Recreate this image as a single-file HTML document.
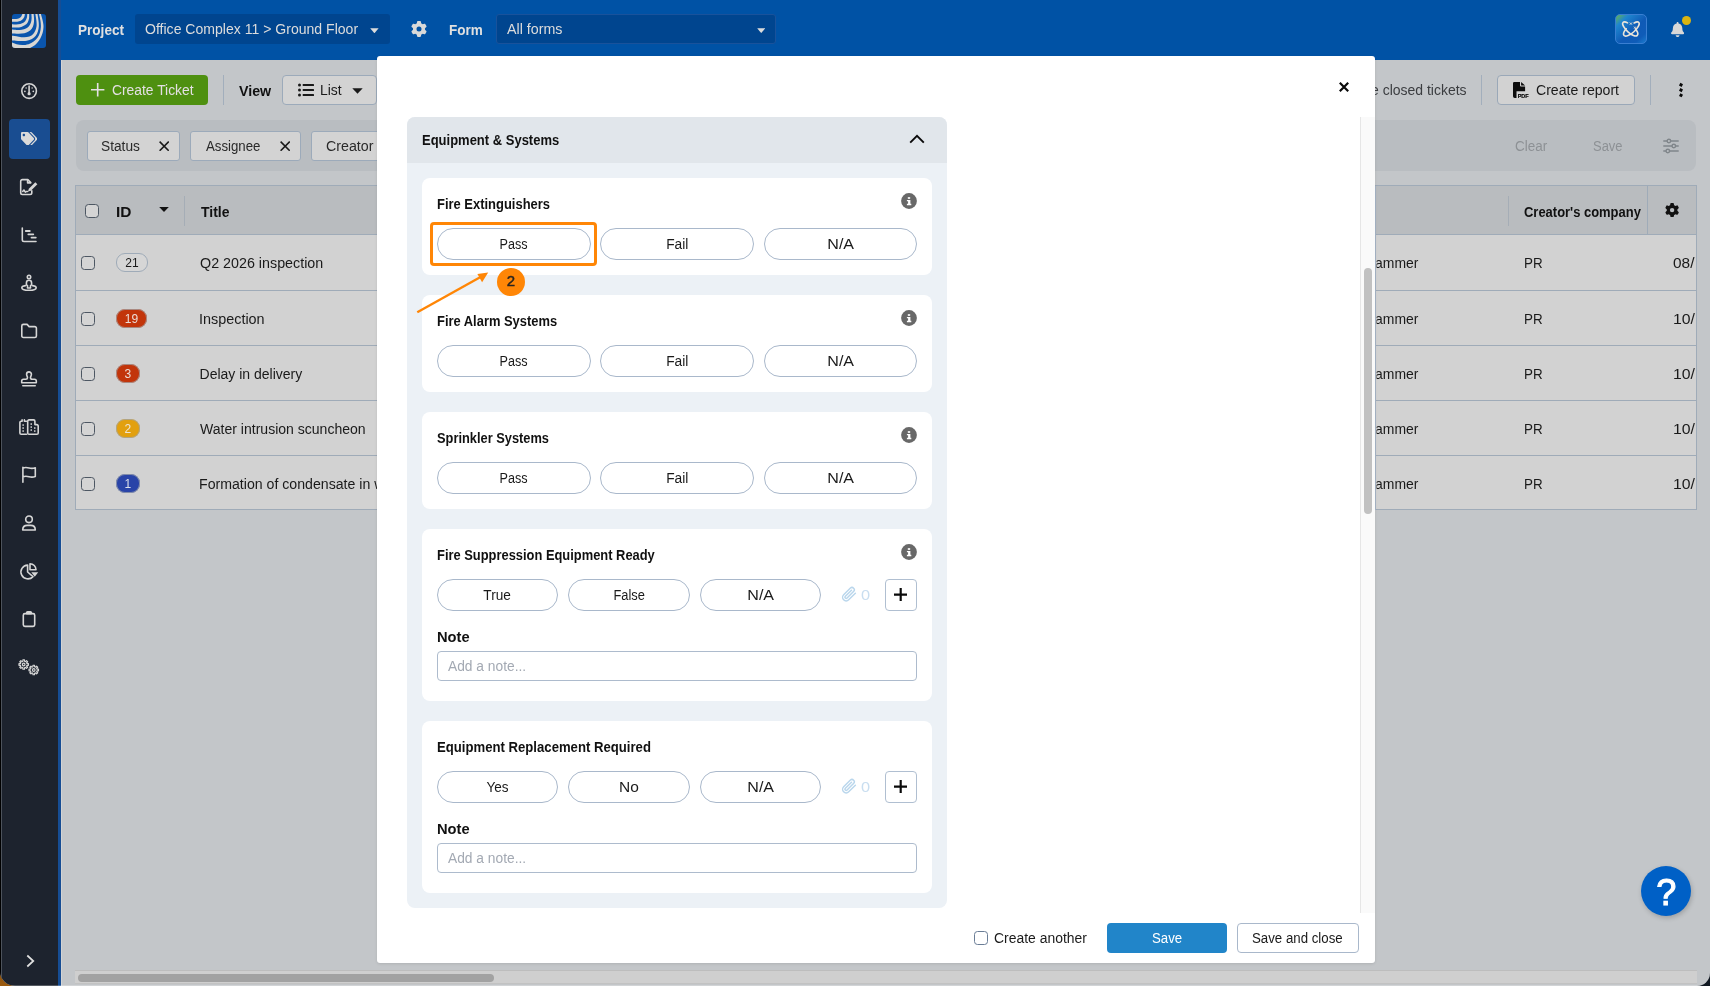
<!DOCTYPE html>
<html lang="en">
<head>
<meta charset="utf-8">
<title>Tickets</title>
<style>
*{box-sizing:border-box;margin:0;padding:0}
html,body{width:1710px;height:986px;overflow:hidden;background:#111822}
body{font-family:"Liberation Sans",sans-serif;font-size:15px;color:#1a1a1a;position:relative}
.abs{position:absolute}
.t{position:absolute;white-space:nowrap;line-height:20px}
.b{font-weight:bold}
#win{will-change:transform;position:absolute;left:0;top:0;width:1710px;height:986px;overflow:hidden;border-radius:0 0 13px 15px;background:#c3c6c9}
#cornerL{position:absolute;left:0;top:940px;width:30px;height:46px;background:linear-gradient(to bottom,#000 0%,#3a2206 40%,#8a510e 70%,#9c5c11 100%)}
/* sidebar */
#side{position:absolute;left:0;top:0;width:58px;height:986px;background:#1d232e;border-left:1px solid #000;box-shadow:inset 1px 0 0 #4d535c}
#strip{position:absolute;left:58px;top:0;width:3px;height:986px;background:#164d94}
#side svg{position:absolute;overflow:visible}
.ic{fill:none;stroke:#d6d6d6;stroke-width:1.6;stroke-linecap:round;stroke-linejoin:round}
/* header */
#hdr{position:absolute;left:58px;top:0;width:1652px;height:60px;background:#0052a5}
.dd{position:absolute;top:14px;height:30px;background:#00458f;border-radius:3px}
/* toolbar */
.btn{position:absolute;height:30px;border-radius:4px}
.vdiv{position:absolute;width:1px;background:#a2aebc}
#fbar{position:absolute;left:76px;top:120px;width:1620px;height:50.500px;background:#b9bdc1;border-radius:8px}
.chip{position:absolute;top:131px;height:29.700px;background:#d3d3d3;border:1px solid #9caaba;border-radius:3px}
/* table */
#tbl{position:absolute;left:75px;top:185px;width:1622px;height:325px;background:#d2d2d2;border:1px solid #9fabb8}
#thead{position:absolute;left:0;top:0;width:1620px;height:49px;background:#b9bcbf;border-bottom:1px solid #9fabb8}
.rl{position:absolute;left:0;width:1620px;height:1px;background:#9fabb8}
.cb{position:absolute;width:14px;height:14px;border:1.200px solid #4d5763;border-radius:3.500px;background:#d4d4d4}
.pill{position:absolute;height:18px;border-radius:9px;font-size:12px;line-height:18px;text-align:center;color:#e4e4e4}

/* modal */
#modal{position:absolute;left:377px;top:56px;width:998.300px;height:907px;background:#fff;border-radius:3px;box-shadow:0 1px 3px rgba(0,0,0,.10)}
#sect{position:absolute;left:407px;top:117px;width:540px;height:791px;background:#ecf1f6;border-radius:8px;overflow:hidden}
#secth{position:absolute;left:0;top:0;width:540px;height:45.500px;background:#e1e6eb}
.card{position:absolute;left:422px;width:510px;background:#fff;border-radius:8px}
.opt{position:absolute;height:32px;border:1px solid #a9b8cb;border-radius:16px;background:#fff;font-size:14px;line-height:30px;text-align:center;color:#1a1a1a}
.opt span{display:inline-block}
.info{position:absolute;width:16px;height:16px}
.note{position:absolute;left:437px;width:480px;height:30px;border:1px solid #adbbcd;border-radius:4px;background:#fff}
.plus{position:absolute;left:885px;width:32px;height:32px;border:1px solid #b0bfd1;border-radius:4px;background:#fff}
/*FIT*/
#tProject{transform:scaleX(0.9045);transform-origin:0 50%;left:77.30px !important}
#tOffice{transform:scaleX(1.0036);transform-origin:0 50%;left:144.65px !important}
#tForm{transform:scaleX(0.9014);transform-origin:0 50%;left:448.20px !important}
#tAllforms{transform:scaleX(1.0185);transform-origin:0 50%;left:507.10px !important}
#tCreate{transform:scaleX(0.9884);transform-origin:0 50%;left:111.56px !important}
#tView{transform:scaleX(0.9481);transform-origin:0 50%;left:239.06px !important}
#tList{transform:scaleX(0.9928);transform-origin:0 50%;left:320.11px !important}
#tReport{transform:scaleX(1.0067);transform-origin:0 50%;left:1535.84px !important}
#tStatus{transform:scaleX(0.9792);transform-origin:0 50%;left:101.97px !important}
#tAssignee{transform:scaleX(0.9456);transform-origin:0 50%;left:206.60px !important}
#tCreator{transform:scaleX(1.0164);transform-origin:0 50%;left:325.94px !important}
#tClear{transform:scaleX(0.9631);transform-origin:0 50%;left:1514.98px !important}
#tFSave{transform:scaleX(0.9246);transform-origin:0 50%;left:1593.61px !important}
#tID{transform:scaleX(1.0296);transform-origin:0 50%;left:115.37px !important}
#tTitle{transform:scaleX(0.9311);transform-origin:0 50%;left:200.77px !important}
#tCompany{transform:scaleX(0.8638);transform-origin:0 50%;left:1524.27px !important}
#tT0{transform:scaleX(1.0218);transform-origin:0 50%;left:199.83px !important}
#tT1{transform:scaleX(1.0283);transform-origin:0 50%;left:199.31px !important}
#tT2{transform:scaleX(1.0000);transform-origin:0 50%;left:199.60px !important}
#tT3{transform:scaleX(1.0027);transform-origin:0 50%;left:200.60px !important}
#tP0{transform:scaleX(0.9577);transform-origin:0 50%;left:1523.74px !important}
#tP1{transform:scaleX(0.9577);transform-origin:0 50%;left:1523.74px !important}
#tP2{transform:scaleX(0.9577);transform-origin:0 50%;left:1523.74px !important}
#tP3{transform:scaleX(0.9577);transform-origin:0 50%;left:1523.74px !important}
#tP4{transform:scaleX(0.9577);transform-origin:0 50%;left:1523.74px !important}
#tSect{transform:scaleX(0.8663);transform-origin:0 50%;left:421.83px !important}
#tC0{transform:scaleX(0.8634);transform-origin:0 50%;left:436.84px !important}
#tC1{transform:scaleX(0.8609);transform-origin:0 50%;left:436.74px !important}
#tC2{transform:scaleX(0.8555);transform-origin:0 50%;left:436.77px !important}
#tC3{transform:scaleX(0.8595);transform-origin:0 50%;left:436.74px !important}
#tC4{transform:scaleX(0.8760);transform-origin:0 50%;left:436.72px !important}
#tO00{transform:scaleX(0.9008);transform-origin:50% 50%}
#tO10{transform:scaleX(0.9008);transform-origin:50% 50%}
#tO20{transform:scaleX(0.9008);transform-origin:50% 50%}
#tO01{transform:scaleX(0.9831);transform-origin:50% 50%}
#tO11{transform:scaleX(0.9831);transform-origin:50% 50%}
#tO21{transform:scaleX(0.9831);transform-origin:50% 50%}
#tO02{transform:scaleX(1.1461);transform-origin:50% 50%}
#tO12{transform:scaleX(1.1461);transform-origin:50% 50%}
#tO22{transform:scaleX(1.1461);transform-origin:50% 50%}
#tO32{transform:scaleX(1.1461);transform-origin:50% 50%}
#tO42{transform:scaleX(1.1461);transform-origin:50% 50%}
#tO30{transform:scaleX(0.9745);transform-origin:50% 50%}
#tO31{transform:scaleX(0.9191);transform-origin:50% 50%}
#tO40{transform:scaleX(0.9655);transform-origin:50% 50%}
#tO41{transform:scaleX(1.1077);transform-origin:50% 50%}
#tZ3{transform:scaleX(1.1704);transform-origin:0 50%;left:861.41px !important}
#tZ4{transform:scaleX(1.1704);transform-origin:0 50%;left:861.41px !important}
#tN3{transform:scaleX(0.9795);transform-origin:0 50%;left:436.82px !important}
#tN4{transform:scaleX(0.9795);transform-origin:0 50%;left:436.82px !important}
#tPh3{transform:scaleX(0.9840);transform-origin:0 50%;left:448.10px !important}
#tPh4{transform:scaleX(0.9840);transform-origin:0 50%;left:448.10px !important}
#tAnother{transform:scaleX(0.9946);transform-origin:0 50%;left:994.15px !important}
#tSave{transform:scaleX(0.9443);transform-origin:0 50%;left:1151.79px !important}
#tSaveClose{transform:scaleX(0.9471);transform-origin:0 50%;left:1252.49px !important}
#tD0{transform:scaleX(1.1000);transform-origin:0 50%;left:1673.25px !important}
#tD1{transform:scaleX(1.1297);transform-origin:0 50%;left:1672.67px !important}
#tD2{transform:scaleX(1.1297);transform-origin:0 50%;left:1672.67px !important}
#tD3{transform:scaleX(1.1297);transform-origin:0 50%;left:1672.67px !important}
#tD4{transform:scaleX(1.1297);transform-origin:0 50%;left:1672.67px !important}
#tT4{transform:scaleX(1.0100);transform-origin:0 50%}
#tHide{transform:scaleX(0.9988);transform-origin:0 50%;left:1350.29px !important}
#tA0{transform:scaleX(0.9965);transform-origin:0 50%;left:1341.07px !important;clip-path:inset(0 0 0 35.7px)}
#tA1{transform:scaleX(0.9965);transform-origin:0 50%;left:1341.07px !important;clip-path:inset(0 0 0 35.7px)}
#tA2{transform:scaleX(0.9965);transform-origin:0 50%;left:1341.07px !important;clip-path:inset(0 0 0 35.7px)}
#tA3{transform:scaleX(0.9965);transform-origin:0 50%;left:1341.07px !important;clip-path:inset(0 0 0 35.7px)}
#tA4{transform:scaleX(0.9965);transform-origin:0 50%;left:1341.07px !important;clip-path:inset(0 0 0 35.7px)}
/*ENDFIT*/
/*FIX*/
#tD0{margin-left:-0.68px}
#tD1{margin-left:0.16px}
#tD2{margin-left:0.16px}
#tD3{margin-left:0.16px}
#tD4{margin-left:0.16px}
#tProject{margin-left:0.80px}
#tOffice{margin-left:0.46px}
#tForm{margin-left:0.80px}
#tAllforms{margin-left:-0.10px}
#tCreate{margin-left:0.22px}
#tList{margin-left:-0.06px}
#tReport{margin-left:0.20px}
#tStatus{margin-left:-0.80px}
#tAssignee{margin-left:-0.20px}
#tCreator{margin-left:0.40px}
#tFSave{margin-left:-0.46px}
#tID{margin-left:0.90px}
#tTitle{margin-left:0.64px}
#tCompany{margin-left:0.11px}
#tT0{margin-left:-0.11px}
#tT1{margin-left:-0.50px}
#tT2{margin-left:-0.05px}
#tT3{margin-left:-0.26px}
#tP0{margin-left:0.16px}
#tP1{margin-left:0.16px}
#tP2{margin-left:0.16px}
#tP3{margin-left:0.16px}
#tP4{margin-left:0.16px}
#tSect{margin-left:0.40px}
#tC0{margin-left:0.40px}
#tC1{margin-left:0.20px}
#tC2{margin-left:0.18px}
#tC3{margin-left:0.20px}
#tC4{margin-left:0.20px}
#tN3{margin-left:0.60px}
#tN4{margin-left:0.60px}
#tPh3{margin-left:-0.09px}
#tPh4{margin-left:-0.09px}
#tZ3{margin-left:-0.32px}
#tZ4{margin-left:-0.32px}
#tAnother{margin-left:-0.10px}
#tSave{margin-left:-0.12px}
#tSaveClose{margin-left:-0.89px}
#tT4{margin-left:-0.16px}
/*ENDFIX*/
</style>
</head>
<body>
<div id="cornerL"></div>
<div id="win">

<!-- ============ HEADER ============ -->
<div id="hdr"></div>
<div class="t b" id="tProject" style="left:78px;top:19.600px;color:#e0e0e0;font-size:15px">Project</div>
<div class="dd" style="left:135px;width:255px"></div>
<div class="t" id="tOffice" style="left:145px;top:18.900px;color:#dcdcdc;font-size:14px">Office Complex 11 &gt; Ground Floor</div>
<svg class="abs" style="left:369.800px;top:27.500px" width="8.800" height="5.500" viewBox="0 0 10 6"><path d="M0.200 0.200h9.600L5 5.900z" fill="#dcdcdc"/></svg>
<svg class="abs" id="gear1" style="left:411px;top:21px" width="16" height="16" viewBox="0 0 512 512"><path fill="#d9d9d9" d="M495.9 166.600c3.200 8.700.500 18.400-6.400 24.600l-43.300 39.400c1.100 8.300 1.700 16.800 1.700 25.400s-.6 17.100-1.700 25.400l43.300 39.400c6.900 6.200 9.600 15.900 6.400 24.600c-4.400 11.900-9.700 23.300-15.800 34.300l-4.700 8.100c-6.600 11-14 21.400-22.100 31.200c-5.900 7.200-15.700 9.600-24.500 6.800l-55.700-17.700c-13.400 10.300-28.200 18.900-44 25.400l-12.500 57.100c-2 9.100-9 16.300-18.200 17.800c-13.800 2.300-28 3.500-42.500 3.500s-28.700-1.200-42.500-3.500c-9.200-1.500-16.200-8.700-18.200-17.800l-12.500-57.100c-15.800-6.500-30.600-15.100-44-25.400L83.100 425.900c-8.800 2.800-18.600.300-24.500-6.800c-8.100-9.800-15.500-20.200-22.100-31.200l-4.700-8.100c-6.100-11-11.400-22.400-15.800-34.300c-3.200-8.700-.5-18.400 6.400-24.600l43.300-39.400C64.600 273.100 64 264.600 64 256s.6-17.100 1.700-25.400L22.400 191.200c-6.900-6.200-9.600-15.900-6.400-24.600c4.400-11.900 9.700-23.300 15.800-34.300l4.700-8.100c6.600-11 14-21.400 22.100-31.200c5.900-7.200 15.700-9.600 24.500-6.800l55.700 17.700c13.400-10.300 28.200-18.900 44-25.400l12.500-57.100c2-9.100 9-16.300 18.200-17.800C227.300 1.200 241.500 0 256 0s28.700 1.200 42.500 3.500c9.200 1.500 16.200 8.700 18.200 17.800l12.500 57.100c15.800 6.500 30.600 15.100 44 25.400l55.700-17.700c8.800-2.800 18.600-.3 24.500 6.800c8.100 9.800 15.500 20.200 22.100 31.200l4.700 8.100c6.100 11 11.400 22.400 15.800 34.300zM256 336a80 80 0 1 0 0-160 80 80 0 1 0 0 160z"/></svg>
<div class="t b" id="tForm" style="left:449px;top:19.600px;color:#e0e0e0;font-size:15px">Form</div>
<div class="dd" style="left:496px;width:280px;border:1px solid #19529b"></div>
<div class="t" id="tAllforms" style="left:507px;top:18.900px;color:#dcdcdc;font-size:14px">All forms</div>
<svg class="abs" style="left:756.800px;top:27.700px" width="8.400" height="5.300" viewBox="0 0 10 6"><path d="M0.200 0.200h9.600L5 5.900z" fill="#dcdcdc"/></svg>

<!-- AI button + bell -->
<svg class="abs" style="left:1615px;top:14px" width="32" height="30" viewBox="0 0 32 30"><defs><linearGradient id="aig" x1="0" y1="0" x2="1" y2="1"><stop offset="0" stop-color="#6fb844"/><stop offset=".22" stop-color="#1f86cf"/><stop offset=".55" stop-color="#0f5ab6"/><stop offset=".8" stop-color="#0f5cb8"/><stop offset="1" stop-color="#1c7fd0"/></linearGradient></defs><rect x=".5" y=".5" width="31" height="29" rx="4.500" fill="url(#aig)" stroke="#3a7fd2"/>
<g transform="translate(16 15.200) scale(.9) translate(-16 -15.200)"><g fill="none" stroke="#e9e4da" stroke-width="1.800" stroke-linecap="round"><path d="M12.200 8.200c-2.300-1.200-4.300-1.300-5.100-.4c-1.600 1.700 1.300 6.400 5.500 10.300s8.800 5.700 10.400 4c1.300-1.400.2-4.300-2.200-7.300"/><path d="M19.500 8.300c2.300-1.300 4.300-1.500 5.200-.6c1.600 1.700-1.300 6.400-5.500 10.300s-9.300 5.900-10.900 4.200c-1.300-1.400-.2-4.400 2.300-7.500"/></g><g stroke="#e9e4da" stroke-width="1" fill="none"><path d="M14.700 7.800l2.400 2.400M17.100 7.800l-2.400 2.400M19.300 12.300l2 2M21.300 12.300l-2 2"/></g></g></svg>
<svg class="abs" style="left:1671px;top:22px" width="13.200" height="15" viewBox="0 0 448 512"><path fill="#d8d8d8" d="M224 512c35.320 0 63.970-28.650 63.970-64H160.030c0 35.350 28.650 64 63.970 64zm215.390-149.710c-19.320-20.760-55.470-51.990-55.470-154.290 0-77.700-54.480-139.900-127.940-155.160V32c0-17.670-14.320-32-31.980-32s-31.980 14.330-31.980 32v20.840C118.560 68.100 64.080 130.300 64.080 208c0 102.300-36.150 133.530-55.470 154.290-6 6.450-8.660 14.160-8.610 21.710.11 16.400 12.980 32 32.100 32h383.800c19.120 0 32-15.600 32.100-32 .05-7.550-2.610-15.270-8.610-21.710z"/></svg>
<div class="abs" style="left:1682px;top:16px;width:9px;height:9px;border-radius:5px;background:#dab411"></div>
<!-- ============ SIDEBAR ============ -->
<div id="side"></div>
<div id="strip"></div>
<div class="abs" style="left:9px;top:119px;width:41px;height:40px;background:#194d91;border-radius:4px"></div>
<!-- logo -->
<svg class="abs" style="left:12px;top:14px" width="34" height="34" viewBox="0 0 34 34">
<defs><clipPath id="lgc"><rect x="0" y="0" width="34" height="34" rx="3"/></clipPath></defs>
<g clip-path="url(#lgc)"><rect width="34" height="34" fill="#0a55ad"/>
<path fill="#d9d7d3" d="M12.90 0.00C12.80 0.48 12.73 1.95 12.27 2.90C11.80 3.84 10.99 4.95 10.14 5.66C9.28 6.37 8.29 6.80 7.16 7.16C6.02 7.51 4.51 7.69 3.32 7.79C2.13 7.90 0.55 7.79 0.00 7.79L0.00 5.03C0.70 5.03 2.98 5.17 4.17 5.03C5.37 4.88 6.30 4.60 7.16 4.17C8.01 3.75 8.75 3.17 9.28 2.47C9.82 1.77 10.17 0.41 10.35 0.00ZM17.16 0.00C17.14 0.77 17.28 3.19 17.04 4.60C16.79 6.01 16.33 7.37 15.67 8.43C15.02 9.50 14.18 10.24 13.12 10.99C12.05 11.73 10.70 12.48 9.28 12.90C7.86 13.33 6.15 13.44 4.60 13.54C3.05 13.65 0.77 13.54 0.00 13.54L0.00 10.35C0.41 10.38 1.42 10.56 2.47 10.56C3.52 10.56 5.03 10.56 6.30 10.35C7.58 10.14 9.00 9.82 10.14 9.28C11.27 8.75 12.34 8.08 13.12 7.16C13.90 6.23 14.47 4.94 14.82 3.75C15.18 2.56 15.18 0.62 15.25 0.00ZM21.64 0.00C21.71 0.91 22.06 3.76 22.06 5.45C22.06 7.14 21.99 8.65 21.64 10.14C21.28 11.63 20.78 13.19 19.93 14.40C19.08 15.60 17.80 16.56 16.52 17.38C15.25 18.19 13.90 18.90 12.27 19.29C10.63 19.68 8.77 19.68 6.73 19.72C4.68 19.75 1.12 19.54 0.00 19.51L0.00 15.46C0.77 15.53 2.98 15.85 4.60 15.89C6.22 15.92 8.15 15.92 9.71 15.67C11.27 15.42 12.76 14.96 13.97 14.40C15.18 13.83 16.13 13.19 16.95 12.27C17.77 11.34 18.43 10.14 18.87 8.86C19.31 7.58 19.50 6.08 19.59 4.60C19.68 3.12 19.45 0.77 19.42 0.00ZM25.47 0.00C25.65 1.12 26.31 4.68 26.53 6.73C26.76 8.77 26.94 10.49 26.83 12.27C26.72 14.04 26.41 15.81 25.89 17.38C25.38 18.94 24.76 20.36 23.76 21.64C22.77 22.91 21.42 24.19 19.93 25.04C18.44 25.89 16.67 26.43 14.82 26.75C12.98 27.07 10.70 26.97 8.86 26.96C7.01 26.94 5.22 26.73 3.75 26.66C2.27 26.59 0.62 26.55 0.00 26.53L0.00 21.64C0.41 21.69 1.35 21.80 2.47 21.98C3.59 22.15 5.10 22.47 6.73 22.70C8.36 22.93 10.49 23.37 12.27 23.34C14.04 23.30 15.89 23.06 17.38 22.49C18.87 21.92 20.22 20.93 21.21 19.93C22.20 18.94 22.79 17.80 23.34 16.52C23.89 15.25 24.35 13.90 24.53 12.27C24.71 10.63 24.60 8.77 24.40 6.73C24.20 4.68 23.52 1.12 23.34 0.00ZM28.88 0.00C29.09 0.77 29.74 2.91 30.15 4.60C30.57 6.29 31.13 8.57 31.35 10.14C31.56 11.70 31.56 12.48 31.43 13.97C31.30 15.46 31.08 17.38 30.58 19.08C30.08 20.78 29.37 22.56 28.45 24.19C27.53 25.82 26.25 27.53 25.04 28.88C23.84 30.22 22.42 31.42 21.21 32.28C20.00 33.15 18.37 33.77 17.80 34.07L0 34L0.00 28.45C0.77 28.73 2.91 29.73 4.60 30.15C6.29 30.58 8.15 31.01 10.14 31.01C12.12 31.01 14.61 30.72 16.52 30.15C18.44 29.59 20.14 28.66 21.64 27.60C23.13 26.53 24.44 25.18 25.47 23.76C26.50 22.35 27.24 20.85 27.81 19.08C28.38 17.31 28.77 15.18 28.88 13.12C28.98 11.06 28.77 8.92 28.45 6.73C28.13 4.54 27.21 1.12 26.96 0.00Z"/></g></svg>
<!-- 1 gauge -->
<svg class="abs" style="left:19px;top:81px" width="20" height="20" viewBox="0 0 20 20"><g class="ic" stroke-width="1.500"><circle cx="10.100" cy="10.100" r="7.300"/><path d="M10.100 5v7"/></g><circle cx="10.100" cy="12.700" r="1.600" fill="#d6d6d6"/><circle cx="5.900" cy="10.300" r=".85" fill="#d6d6d6"/><circle cx="14.300" cy="10.300" r=".85" fill="#d6d6d6"/><circle cx="7.100" cy="7.100" r=".75" fill="#d6d6d6"/><circle cx="13.100" cy="7.100" r=".75" fill="#d6d6d6"/></svg>
<!-- 2 tags -->
<svg class="abs" style="left:21px;top:131.700px" width="16.400" height="13.600" viewBox="0 0 640 512" preserveAspectRatio="none"><path fill="#dadada" d="M497.941 225.941L286.059 14.059A48 48 0 0 0 252.118 0H48C21.490 0 0 21.490 0 48v204.118a48 48 0 0 0 14.059 33.941l211.882 211.882c18.744 18.745 49.136 18.746 67.882 0l204.118-204.118c18.745-18.745 18.745-49.137 0-67.882zM112 160c-26.510 0-48-21.490-48-48s21.490-48 48-48 48 21.490 48 48-21.490 48-48 48zm513.941 133.823L421.823 497.941c-18.745 18.745-49.137 18.745-67.882 0l-.36-.36L527.640 323.522c16.999-16.999 26.360-39.600 26.360-63.640s-9.362-46.641-26.360-63.640L331.397 0h48.721a48 48 0 0 1 33.941 14.059l211.882 211.882c18.745 18.745 18.745 49.137 0 67.882z"/></svg>
<!-- 3 file pen -->
<svg class="abs" style="left:18px;top:177px" width="20" height="20" viewBox="0 0 20 20"><g class="ic" stroke-width="1.500"><path d="M13.800 13.800v2a1.700 1.700 0 0 1-1.700 1.700H4.400a1.700 1.700 0 0 1-1.700-1.700V4.300a1.700 1.700 0 0 1 1.700-1.700h5.400l2.800 2.800"/><path d="M9.600 2.700v3.200h3.100"/><path d="M4.800 14.500c.8-2 1.500-2 2 0c.4.900 1 .7 1.600 0h1.200"/></g><path d="M17.300 5.200l2.100 2.100-6.500 6.500-2.900.8.800-2.900z" fill="#d6d6d6"/></svg>
<!-- 4 gantt -->
<svg class="abs" style="left:19px;top:225px" width="20" height="20" viewBox="0 0 20 20"><g class="ic"><path d="M3.300 3v11.800a1.700 1.700 0 0 0 1.700 1.700h12"/><path d="M6.800 6h4M9.300 9.300h5M12.500 12.600h4.300" stroke-width="1.800"/></g></svg>
<!-- 5 street view -->
<svg class="abs" style="left:19px;top:273px" width="20" height="20" viewBox="0 0 20 20"><g class="ic" stroke-width="1.500"><circle cx="10" cy="4" r="1.700"/><path d="M7.400 9.900a2.600 2.600 0 0 1 5.200 0v1.900l-1.100.8v2.400H8.500v-2.400l-1.100-.8z"/><path d="M6.300 12.600c-2.100.4-3.500 1.200-3.500 2.100c0 1.500 3.200 2.600 7.200 2.600s7.200-1.100 7.200-2.600c0-.9-1.400-1.700-3.500-2.100"/></g></svg>
<!-- 6 folder -->
<svg class="abs" style="left:19px;top:321px" width="20" height="20" viewBox="0 0 20 20"><path class="ic" d="M2.800 5a1.600 1.600 0 0 1 1.600-1.600h3.700l2 2.200h5.700a1.600 1.600 0 0 1 1.600 1.600v7.700a1.600 1.600 0 0 1-1.600 1.600H4.400a1.600 1.600 0 0 1-1.600-1.600z"/></svg>
<!-- 7 stamp -->
<svg class="abs" style="left:19px;top:369px" width="20" height="20" viewBox="0 0 20 20"><g class="ic" stroke-width="1.500"><path d="M7.600 5.300a2.400 2.400 0 1 1 4.800 0c0 1.500-.9 2.200-.9 3.500c0 1 .6 1.500 1.800 1.500h2.200a1.800 1.800 0 0 1 1.800 1.800v1.600H2.700v-1.600a1.800 1.800 0 0 1 1.800-1.800h2.200c1.200 0 1.800-.5 1.800-1.500c0-1.300-.9-2-.9-3.500z"/><path d="M3.800 16.700h12.400"/></g></svg>
<!-- 8 buildings -->
<svg class="abs" style="left:18px;top:417px" width="22" height="20" viewBox="0 0 22 20"><g class="ic"><path d="M8.500 17.200H3.200a1.300 1.300 0 0 1-1.300-1.300V5.600a1.300 1.300 0 0 1 1.300-1.300h.9V2.900M6.400 2.900v1.400h2.100"/><path d="M11 2.900h4.600a1.300 1.300 0 0 1 1.300 1.300v3.400h2a1.300 1.300 0 0 1 1.300 1.300v7a1.300 1.300 0 0 1-1.300 1.300H11a1.300 1.300 0 0 1-1.300-1.300V4.200A1.300 1.300 0 0 1 11 2.900z"/></g><g fill="#d6d6d6"><rect x="4.400" y="7.300" width="1.500" height="1.500"/><rect x="4.400" y="10.300" width="1.500" height="1.500"/><rect x="4.400" y="13.300" width="1.500" height="1.500"/><rect x="12.500" y="6.300" width="1.500" height="1.500"/><rect x="12.500" y="9.300" width="1.500" height="1.500"/><rect x="12.500" y="12.300" width="1.500" height="1.500"/><rect x="16" y="10.300" width="1.500" height="1.500"/><rect x="16" y="13.300" width="1.500" height="1.500"/></g></svg>
<!-- 9 flag -->
<svg class="abs" style="left:19px;top:464px" width="20" height="20" viewBox="0 0 20 20"><path class="ic" stroke-width="1.500" d="M3.900 18.300V3.300M3.900 4c2.500-.8 4.400-.5 6.200 0s3.600.7 6.200-.2v8.700c-2.600.9-4.400.7-6.200.2s-3.700-.8-6.200 0"/></svg>
<!-- 10 user -->
<svg class="abs" style="left:19px;top:513px" width="20" height="20" viewBox="0 0 20 20"><g class="ic"><circle cx="10" cy="6.300" r="3.300"/><path d="M3.700 17c0-2.800 2-4.600 4.600-4.600h3.400c2.600 0 4.600 1.800 4.600 4.600z"/></g></svg>
<!-- 11 pie -->
<svg class="abs" style="left:19px;top:561px" width="20" height="20" viewBox="0 0 20 20"><g class="ic"><path d="M8.600 4.100a6.900 6.900 0 1 0 5.400 11.500L8.600 11z"/><path d="M11 2.700v6h6a6 6 0 0 0-6-6z"/></g><path d="M12.300 11.300h6.900l-3.450 4.400z" fill="#d6d6d6"/></svg>
<!-- 12 clipboard -->
<svg class="abs" style="left:19px;top:609px" width="20" height="20" viewBox="0 0 20 20"><g class="ic"><rect x="4.300" y="4.600" width="11.400" height="12.800" rx="1.600"/><path d="M7.600 4.600V3.900a1 1 0 0 1 1-1h2.800a1 1 0 0 1 1 1v.7" /></g><rect x="7.600" y="2.900" width="4.800" height="2.600" rx=".8" fill="#d6d6d6"/></svg>
<!-- 13 gears -->
<svg class="abs" style="left:17px;top:656px" width="24" height="22" viewBox="0 0 24 22"><g fill="none" stroke="#d6d6d6" stroke-linejoin="round" stroke-width="1.200"><path d="M10.00 7.68L11.43 7.71L11.43 9.29L10.00 9.32L9.61 10.25L10.61 11.29L9.49 12.41L8.45 11.41L7.52 11.80L7.49 13.23L5.91 13.23L5.88 11.80L4.95 11.41L3.91 12.41L2.79 11.29L3.79 10.25L3.40 9.32L1.97 9.29L1.97 7.71L3.40 7.68L3.79 6.75L2.79 5.71L3.91 4.59L4.95 5.59L5.88 5.20L5.91 3.77L7.49 3.77L7.52 5.20L8.45 5.59L9.49 4.59L10.61 5.71L9.61 6.75Z"/><circle cx="6.700" cy="8.500" r="1.300"/><path d="M20.05 13.18L21.48 13.21L21.48 14.79L20.05 14.82L19.66 15.75L20.66 16.79L19.54 17.91L18.50 16.91L17.57 17.30L17.54 18.73L15.96 18.73L15.93 17.30L15.00 16.91L13.96 17.91L12.84 16.79L13.84 15.75L13.45 14.82L12.02 14.79L12.02 13.21L13.45 13.18L13.84 12.25L12.84 11.21L13.96 10.09L15.00 11.09L15.93 10.70L15.96 9.27L17.54 9.27L17.57 10.70L18.50 11.09L19.54 10.09L20.66 11.21L19.66 12.25Z"/><circle cx="16.750" cy="14" r="1.300"/></g></svg>
<!-- chevron -->
<svg class="abs" style="left:24px;top:954px" width="12" height="14" viewBox="0 0 12 14"><path d="M3.300 1.500L9.300 7l-6 5.500" fill="none" stroke="#e0e0e0" stroke-width="1.700"/></svg>

<!-- ============ TOOLBAR ============ -->
<div class="btn" style="left:76px;top:75px;width:132px;background:#4e9010"></div>
<div class="t" id="tCreate" style="left:112.300px;top:80px;color:#e4e0e4;font-size:14px">Create Ticket</div>
<svg class="abs" style="left:91.300px;top:83.200px" width="13.400" height="13.400" viewBox="0 0 12 12"><path d="M6 0v12M0 6h12" stroke="#e4e0e4" stroke-width="1.450" fill="none"/></svg>
<div class="vdiv" style="left:223px;top:75px;height:30px"></div>
<div class="t b" id="tView" style="left:239px;top:81px;font-size:15px;color:#111">View</div>
<div class="btn" style="left:282px;top:75px;width:94.500px;background:#d3d3d3;border:1px solid #9caaba"></div>
<div class="t" id="tList" style="left:321px;top:80px;font-size:14px;color:#1a1a1a">List</div>
<svg class="abs" style="left:298px;top:83px" width="16" height="14" viewBox="0 0 16 14"><g fill="#1a1a1a"><circle cx="1.500" cy="2" r="1.500"/><circle cx="1.500" cy="7" r="1.500"/><circle cx="1.500" cy="12" r="1.500"/><rect x="4.700" y="1.100" width="11.300" height="1.800" rx=".5"/><rect x="4.700" y="6.100" width="11.300" height="1.800" rx=".5"/><rect x="4.700" y="11.100" width="11.300" height="1.800" rx=".5"/></g></svg>
<svg class="abs" style="left:352px;top:88px" width="11" height="6" viewBox="0 0 11 6"><path d="M0.300 0.200h10.400L5.500 5.800z" fill="#1a1a1a"/></svg>
<!-- right toolbar -->
<div class="t" id="tHide" style="left:1344px;top:80px;font-size:14px;color:#3b3d40">Hide closed tickets</div>
<div class="vdiv" style="left:1481px;top:75px;height:30px"></div>
<div class="btn" style="left:1497px;top:75px;width:138px;background:#d2d2d2;border:1px solid #9aa8b8"></div>
<svg class="abs" style="left:1513px;top:82px" width="16" height="16" viewBox="0 0 16 16"><path d="M1.300 0h5.700v3.400a1 1 0 0 0 1 1h4.100v4.900H3.500v6.700H1.800A1.800 1.800 0 0 1 0 14.200V1.300A1.300 1.300 0 0 1 1.300 0zM8.100 0.100l4 3.400h-4z" fill="#0c0c0c"/><text x="4.700" y="15.900" font-family="Liberation Sans, sans-serif" font-weight="bold" font-size="6.200" fill="#0c0c0c" stroke="#0c0c0c" stroke-width=".25" textLength="10.900" lengthAdjust="spacingAndGlyphs">PDF</text></svg>
<div class="t" id="tReport" style="left:1536.500px;top:80px;font-size:14px;color:#1a1a1a">Create report</div>
<div class="vdiv" style="left:1650px;top:75px;height:30px"></div>
<svg class="abs" style="left:1678px;top:82px" width="6" height="16" viewBox="0 0 6 16"><g fill="#0a0a0a"><rect x="1.500" y="1.400" width="3" height="3" transform="rotate(28 3 2.900)"/><rect x="1.500" y="6.600" width="3" height="3" transform="rotate(28 3 8.100)"/><rect x="1.500" y="11.800" width="3" height="3" transform="rotate(28 3 13.300)"/></g></svg>

<!-- filter bar -->
<div id="fbar"></div>
<div class="chip" style="left:86.700px;width:93px"></div>
<div class="t" id="tStatus" style="left:102.500px;top:136px;font-size:14px;color:#2a2a2a">Status</div>
<svg class="abs" style="left:159px;top:141px" width="10.4" height="10.4" viewBox="0 0 10 10"><path d="M0.600 0.600l8.800 8.800M9.400 0.600L0.600 9.400" stroke="#1a1a1a" stroke-width="1.5" fill="none"/></svg>
<div class="chip" style="left:190px;width:110.500px"></div>
<div class="t" id="tAssignee" style="left:206.500px;top:136px;font-size:14px;color:#2a2a2a">Assignee</div>
<svg class="abs" style="left:280px;top:141px" width="10.4" height="10.4" viewBox="0 0 10 10"><path d="M0.600 0.600l8.800 8.800M9.400 0.600L0.600 9.400" stroke="#1a1a1a" stroke-width="1.5" fill="none"/></svg>
<div class="chip" style="left:311.200px;width:111px"></div>
<div class="t" id="tCreator" style="left:326.500px;top:136px;font-size:14px;color:#2a2a2a">Creator</div>
<div class="t" id="tClear" style="left:1515.500px;top:136px;font-size:14px;color:#8d9195">Clear</div>
<div class="t" id="tFSave" style="left:1594px;top:136px;font-size:14px;color:#8d9195">Save</div>
<svg class="abs" style="left:1663px;top:138px" width="16" height="16" viewBox="0 0 16 16"><g stroke="#7f858a"><path d="M0.300 3h15.400M0.300 8h15.400M0.300 13h15.400" stroke-width="1.700" fill="none"/><g fill="#bcc0c4" stroke-width="1.400"><circle cx="5.900" cy="3" r="1.750"/><circle cx="10.800" cy="8" r="1.750"/><circle cx="4.800" cy="13" r="1.750"/></g></g></svg>

<!-- ============ TABLE ============ -->
<div id="tbl"><div id="thead"></div>
<div class="rl" style="top:104px"></div>
<div class="rl" style="top:159px"></div>
<div class="rl" style="top:214px"></div>
<div class="rl" style="top:269px"></div>
</div>
<div class="cb" style="left:85px;top:204px"></div>
<div class="t b" id="tID" style="left:116px;top:201.500px;font-size:15px;color:#111">ID</div>
<svg class="abs" style="left:159px;top:206.500px" width="10" height="5" viewBox="0 0 10 5"><path d="M0.200 0h9.600L5 5z" fill="#111"/></svg>
<div class="vdiv" style="left:184px;top:196px;height:30px;background:#a5adb6"></div>
<div class="t b" id="tTitle" style="left:200.500px;top:201.500px;font-size:15px;color:#111">Title</div>
<div class="vdiv" style="left:1508px;top:196px;height:30px;background:#a5adb6"></div>
<div class="t b" id="tCompany" style="left:1524px;top:201.500px;font-size:15px;color:#111">Creator's company</div>
<div class="abs" style="left:1647px;top:186px;width:49px;height:48px;background:#b9bcbf;border-left:1px solid #9fabb8"></div>
<svg class="abs" style="left:1664.500px;top:203.300px" width="14.200" height="14.200" viewBox="0 0 512 512"><path fill="#111" d="M495.9 166.600c3.200 8.700.500 18.400-6.400 24.600l-43.300 39.400c1.100 8.300 1.700 16.800 1.700 25.400s-.6 17.100-1.700 25.400l43.300 39.400c6.900 6.200 9.600 15.900 6.400 24.600c-4.400 11.900-9.700 23.300-15.800 34.300l-4.700 8.100c-6.600 11-14 21.400-22.100 31.200c-5.900 7.200-15.700 9.600-24.500 6.800l-55.700-17.700c-13.400 10.300-28.200 18.900-44 25.400l-12.500 57.100c-2 9.100-9 16.300-18.200 17.800c-13.800 2.300-28 3.500-42.500 3.500s-28.700-1.200-42.500-3.500c-9.200-1.500-16.200-8.700-18.200-17.800l-12.500-57.100c-15.800-6.500-30.600-15.100-44-25.400L83.100 425.900c-8.800 2.800-18.600.300-24.500-6.800c-8.100-9.800-15.500-20.200-22.100-31.200l-4.700-8.100c-6.100-11-11.400-22.400-15.800-34.300c-3.200-8.700-.5-18.400 6.400-24.600l43.300-39.400C64.600 273.100 64 264.600 64 256s.6-17.100 1.700-25.400L22.400 191.200c-6.900-6.200-9.600-15.900-6.400-24.600c4.400-11.900 9.700-23.300 15.800-34.300l4.700-8.100c6.600-11 14-21.400 22.100-31.200c5.900-7.200 15.700-9.600 24.500-6.800l55.700 17.700c13.400-10.300 28.200-18.900 44-25.400l12.500-57.100c2-9.100 9-16.300 18.200-17.800C227.300 1.200 241.500 0 256 0s28.700 1.200 42.500 3.500c9.200 1.500 16.200 8.700 18.200 17.800l12.500 57.100c15.800 6.500 30.600 15.100 44 25.400l55.700-17.700c8.800-2.800 18.600-.3 24.500 6.800c8.100 9.800 15.500 20.200 22.100 31.200l4.700 8.100c6.100 11 11.400 22.400 15.800 34.300zM256 336a80 80 0 1 0 0-160 80 80 0 1 0 0 160z"/></svg>
<div class="cb" style="left:81px;top:256px"></div>
<div class="pill" id="pl0" style="left:116.200px;top:253.3px;width:31.6px;height:18.400px;line-height:19.200px;background:#d6d6d6;color:#1a1a1a;border:1px solid #9fabb8">21</div>
<div class="t" id="tT0" style="left:200.500px;top:253.000px;font-size:14px;color:#1a1a1a">Q2 2026 inspection</div>
<div class="t" id="tA0" style="left:1336px;top:253.000px;font-size:14px;color:#1a1a1a">Programmer</div>
<div class="t" id="tP0" style="left:1525px;top:253.000px;font-size:14px;color:#1a1a1a">PR</div>
<div class="t" id="tD0" style="left:1673.800px;top:253.000px;font-size:14px;color:#1a1a1a">08/</div>
<div class="cb" style="left:81px;top:312px"></div>
<div class="pill" id="pl1" style="left:116px;top:309.4px;width:31px;height:18.200px;line-height:20.200px;background:#c2350b;color:#ecdcd6;box-shadow:inset 0 0 0 1px rgba(160,165,170,.75)">19</div>
<div class="t" id="tT1" style="left:200.500px;top:309.000px;font-size:14px;color:#1a1a1a">Inspection</div>
<div class="t" id="tA1" style="left:1336px;top:309.000px;font-size:14px;color:#1a1a1a">Programmer</div>
<div class="t" id="tP1" style="left:1525px;top:309.000px;font-size:14px;color:#1a1a1a">PR</div>
<div class="t" id="tD1" style="left:1673.800px;top:309.000px;font-size:14px;color:#1a1a1a">10/</div>
<div class="cb" style="left:81px;top:367px"></div>
<div class="pill" id="pl2" style="left:116px;top:364.4px;width:23.6px;height:18.200px;line-height:20.200px;background:#c2350b;color:#ecdcd6;box-shadow:inset 0 0 0 1px rgba(160,165,170,.75)">3</div>
<div class="t" id="tT2" style="left:200.500px;top:364.000px;font-size:14px;color:#1a1a1a">Delay in delivery</div>
<div class="t" id="tA2" style="left:1336px;top:364.000px;font-size:14px;color:#1a1a1a">Programmer</div>
<div class="t" id="tP2" style="left:1525px;top:364.000px;font-size:14px;color:#1a1a1a">PR</div>
<div class="t" id="tD2" style="left:1673.800px;top:364.000px;font-size:14px;color:#1a1a1a">10/</div>
<div class="cb" style="left:81px;top:422px"></div>
<div class="pill" id="pl3" style="left:116px;top:419.4px;width:23.6px;height:18.200px;line-height:20.200px;background:#e2a00f;color:#efe6d6;box-shadow:inset 0 0 0 1px rgba(160,165,170,.75)">2</div>
<div class="t" id="tT3" style="left:200.500px;top:419.000px;font-size:14px;color:#1a1a1a">Water intrusion scuncheon</div>
<div class="t" id="tA3" style="left:1336px;top:419.000px;font-size:14px;color:#1a1a1a">Programmer</div>
<div class="t" id="tP3" style="left:1525px;top:419.000px;font-size:14px;color:#1a1a1a">PR</div>
<div class="t" id="tD3" style="left:1673.800px;top:419.000px;font-size:14px;color:#1a1a1a">10/</div>
<div class="cb" style="left:81px;top:477px"></div>
<div class="pill" id="pl4" style="left:116px;top:474.4px;width:23.6px;height:18.200px;line-height:20.200px;background:#2944a8;color:#dcdfea;box-shadow:inset 0 0 0 1px rgba(160,165,170,.75)">1</div>
<div class="t" id="tT4" style="left:199.400px;top:474.000px;font-size:14px;color:#1a1a1a">Formation of condensate in windows</div>
<div class="t" id="tA4" style="left:1336px;top:474.000px;font-size:14px;color:#1a1a1a">Programmer</div>
<div class="t" id="tP4" style="left:1525px;top:474.000px;font-size:14px;color:#1a1a1a">PR</div>
<div class="t" id="tD4" style="left:1673.800px;top:474.000px;font-size:14px;color:#1a1a1a">10/</div>

<div class="abs" style="left:1375.300px;top:186px;width:1px;height:324px;background:#a7b6c8"></div>
<!-- ============ MODAL ============ -->
<div id="modal"></div>
<svg class="abs" style="left:1339px;top:82px" width="10" height="10" viewBox="0 0 10 10"><path d="M0.800 0.800l8.400 8.400M9.200 0.800L0.800 9.200" stroke="#0a0a0a" stroke-width="2.200" fill="none"/></svg>
<div id="sect"><div id="secth"></div></div>
<div class="t b" id="tSect" style="left:422px;top:129.600px;font-size:15px;color:#111">Equipment &amp; Systems</div>
<svg class="abs" style="left:909px;top:134px" width="16" height="10" viewBox="0 0 16 10"><path d="M1.200 8.600L8 1.800l6.800 6.800" fill="none" stroke="#0a0a0a" stroke-width="1.900"/></svg>
<div class="card" style="top:178px;height:97px"></div>
<div class="t b" id="tC0" style="left:437px;top:193.500px;font-size:15px;color:#111">Fire Extinguishers</div>
<svg class="info" style="left:901px;top:193px" viewBox="0 0 16 16"><circle cx="8" cy="8" r="7.900" fill="#686868"/><rect x="6.800" y="3.900" width="2.400" height="2" rx=".5" fill="#e9e9e9"/><path d="M5.900 6.900h3.500v3.900h.9v1.400H5.900v-1.400h1.200V8.300H5.900z" fill="#fff"/></svg>
<div class="opt" style="left:437px;top:228px;width:153.5px"><span id="tO00">Pass</span></div>
<div class="opt" style="left:600px;top:228px;width:154px"><span id="tO01">Fail</span></div>
<div class="opt" style="left:763.5px;top:228px;width:153.5px"><span id="tO02">N/A</span></div>
<div class="card" style="top:295px;height:97px"></div>
<div class="t b" id="tC1" style="left:437px;top:310.500px;font-size:15px;color:#111">Fire Alarm Systems</div>
<svg class="info" style="left:901px;top:310px" viewBox="0 0 16 16"><circle cx="8" cy="8" r="7.900" fill="#686868"/><rect x="6.800" y="3.900" width="2.400" height="2" rx=".5" fill="#e9e9e9"/><path d="M5.900 6.900h3.500v3.900h.9v1.400H5.900v-1.400h1.200V8.300H5.900z" fill="#fff"/></svg>
<div class="opt" style="left:437px;top:345px;width:153.5px"><span id="tO10">Pass</span></div>
<div class="opt" style="left:600px;top:345px;width:154px"><span id="tO11">Fail</span></div>
<div class="opt" style="left:763.5px;top:345px;width:153.5px"><span id="tO12">N/A</span></div>
<div class="card" style="top:412px;height:97px"></div>
<div class="t b" id="tC2" style="left:437px;top:427.500px;font-size:15px;color:#111">Sprinkler Systems</div>
<svg class="info" style="left:901px;top:427px" viewBox="0 0 16 16"><circle cx="8" cy="8" r="7.900" fill="#686868"/><rect x="6.800" y="3.900" width="2.400" height="2" rx=".5" fill="#e9e9e9"/><path d="M5.900 6.900h3.500v3.900h.9v1.400H5.900v-1.400h1.200V8.300H5.900z" fill="#fff"/></svg>
<div class="opt" style="left:437px;top:462px;width:153.5px"><span id="tO20">Pass</span></div>
<div class="opt" style="left:600px;top:462px;width:154px"><span id="tO21">Fail</span></div>
<div class="opt" style="left:763.5px;top:462px;width:153.5px"><span id="tO22">N/A</span></div>
<div class="card" style="top:529px;height:172px"></div>
<div class="t b" id="tC3" style="left:437px;top:544.500px;font-size:15px;color:#111">Fire Suppression Equipment Ready</div>
<svg class="info" style="left:901px;top:544px" viewBox="0 0 16 16"><circle cx="8" cy="8" r="7.900" fill="#686868"/><rect x="6.800" y="3.900" width="2.400" height="2" rx=".5" fill="#e9e9e9"/><path d="M5.900 6.900h3.500v3.900h.9v1.400H5.900v-1.400h1.200V8.300H5.900z" fill="#fff"/></svg>
<div class="opt" style="left:437px;top:579px;width:121px"><span id="tO30">True</span></div>
<div class="opt" style="left:568px;top:579px;width:122px"><span id="tO31">False</span></div>
<div class="opt" style="left:700px;top:579px;width:121px"><span id="tO32">N/A</span></div>
<svg class="abs" style="left:839.600px;top:586.2px" width="17.200" height="17.200" viewBox="0 0 16 16"><path d="M14.300 6.700l-6.200 6.200a3.300 3.300 0 0 1-4.700-4.700l6.300-6.300a2.200 2.200 0 0 1 3.100 3.100l-6.200 6.200a1.100 1.100 0 0 1-1.600-1.600l5.700-5.700" fill="none" stroke="#b9d6ec" stroke-width="1.350" stroke-linecap="round"/></svg>
<div class="t" id="tZ3" style="left:861.500px;top:585px;font-size:14px;color:#c9def0">0</div>
<div class="plus" style="top:579px"></div>
<svg class="abs" style="left:894px;top:587.9px" width="13.400" height="13.400" viewBox="0 0 13 13"><path d="M6.500 0v13M0 6.500h13" stroke="#0a0a0a" stroke-width="2.100" fill="none"/></svg>
<div class="t b" id="tN3" style="left:437px;top:626.500px;font-size:15px;color:#111">Note</div>
<div class="note" style="top:651px"></div>
<div class="t" id="tPh3" style="left:448px;top:655.5px;font-size:14px;color:#a3a9b3">Add a note...</div>
<div class="card" style="top:721px;height:172px"></div>
<div class="t b" id="tC4" style="left:437px;top:736.500px;font-size:15px;color:#111">Equipment Replacement Required</div>
<div class="opt" style="left:437px;top:771px;width:121px"><span id="tO40">Yes</span></div>
<div class="opt" style="left:568px;top:771px;width:122px"><span id="tO41">No</span></div>
<div class="opt" style="left:700px;top:771px;width:121px"><span id="tO42">N/A</span></div>
<svg class="abs" style="left:839.600px;top:778.2px" width="17.200" height="17.200" viewBox="0 0 16 16"><path d="M14.300 6.700l-6.200 6.200a3.300 3.300 0 0 1-4.700-4.700l6.300-6.300a2.200 2.200 0 0 1 3.100 3.100l-6.200 6.200a1.100 1.100 0 0 1-1.600-1.600l5.700-5.700" fill="none" stroke="#b9d6ec" stroke-width="1.350" stroke-linecap="round"/></svg>
<div class="t" id="tZ4" style="left:861.500px;top:777px;font-size:14px;color:#c9def0">0</div>
<div class="plus" style="top:771px"></div>
<svg class="abs" style="left:894px;top:779.9px" width="13.400" height="13.400" viewBox="0 0 13 13"><path d="M6.500 0v13M0 6.500h13" stroke="#0a0a0a" stroke-width="2.100" fill="none"/></svg>
<div class="t b" id="tN4" style="left:437px;top:818.500px;font-size:15px;color:#111">Note</div>
<div class="note" style="top:843px"></div>
<div class="t" id="tPh4" style="left:448px;top:847.5px;font-size:14px;color:#a3a9b3">Add a note...</div>
<!-- annotation -->
<div class="abs" style="left:429.800px;top:221.800px;width:167.200px;height:44.400px;border:3px solid #ff8606;border-radius:4px"></div>
<svg class="abs" style="left:410px;top:262px;overflow:visible" width="130" height="56" viewBox="410 262 130 56"><path d="M417.300 312.300L481 276.700" stroke="#ff8606" stroke-width="2.400" fill="none"/><path d="M488.200 272.600l-10.800 1.300 4.700 8.300z" fill="#ff8606"/><circle cx="511" cy="282" r="14" fill="#ff8606"/><text x="511" y="286.200" text-anchor="middle" font-family="Liberation Sans, sans-serif" font-size="15" fill="#2a2520" stroke="#2a2520" stroke-width=".45">2</text></svg>
<div class="abs" style="left:1360px;top:117px;width:15.300px;height:796px;background:#fafafa;border-left:1px solid #e6e6e6"></div>
<div class="abs" style="left:1364px;top:268px;width:8px;height:246px;background:#c1c1c1;border-radius:4px"></div>
<div class="cb" style="left:974px;top:931px;width:14px;height:14px;background:#fff;border:1.200px solid #6a7d96;border-radius:3.500px"></div>
<div class="t" id="tAnother" style="left:994.500px;top:928px;font-size:14px;color:#1a1a1a">Create another</div>
<div class="btn" style="left:1107px;top:923px;width:120px;background:#2185c9"></div>
<div class="t" id="tSave" style="left:1152px;top:928px;font-size:14px;color:#fff">Save</div>
<div class="btn" style="left:1237px;top:923px;width:122px;background:#fff;border:1px solid #a9b8cb"></div>
<div class="t" id="tSaveClose" style="left:1253px;top:928px;font-size:14px;color:#1a1a1a">Save and close</div>
<div class="abs" style="left:61px;top:60px;width:1px;height:926px;background:#d3d4d5"></div>
<!-- h scrollbar -->
<div class="abs" style="left:75px;top:970px;width:1622px;height:14px;background:#cfcfcf;border-top:1px solid #bdbdbd;border-bottom:1px solid #c2c2c2"></div>
<div class="abs" style="left:78px;top:973.500px;width:416px;height:8px;background:#a2a2a2;border-radius:4px"></div>
<div class="abs" style="left:0;top:985px;width:1710px;height:1px;background:rgba(255,255,255,.25)"></div>
<!-- help -->
<div class="abs" style="left:1641px;top:866px;width:50px;height:50px;border-radius:25px;background:#0060c6;box-shadow:1px 2px 5px rgba(0,0,0,.2)"></div>
<div class="t" id="tQ" style="left:1651.300px;top:871.600px;width:30px;text-align:center;font-size:36px;line-height:42px;color:#fff;-webkit-text-stroke:1.100px #fff">?</div>
</div>
</body>
</html>
